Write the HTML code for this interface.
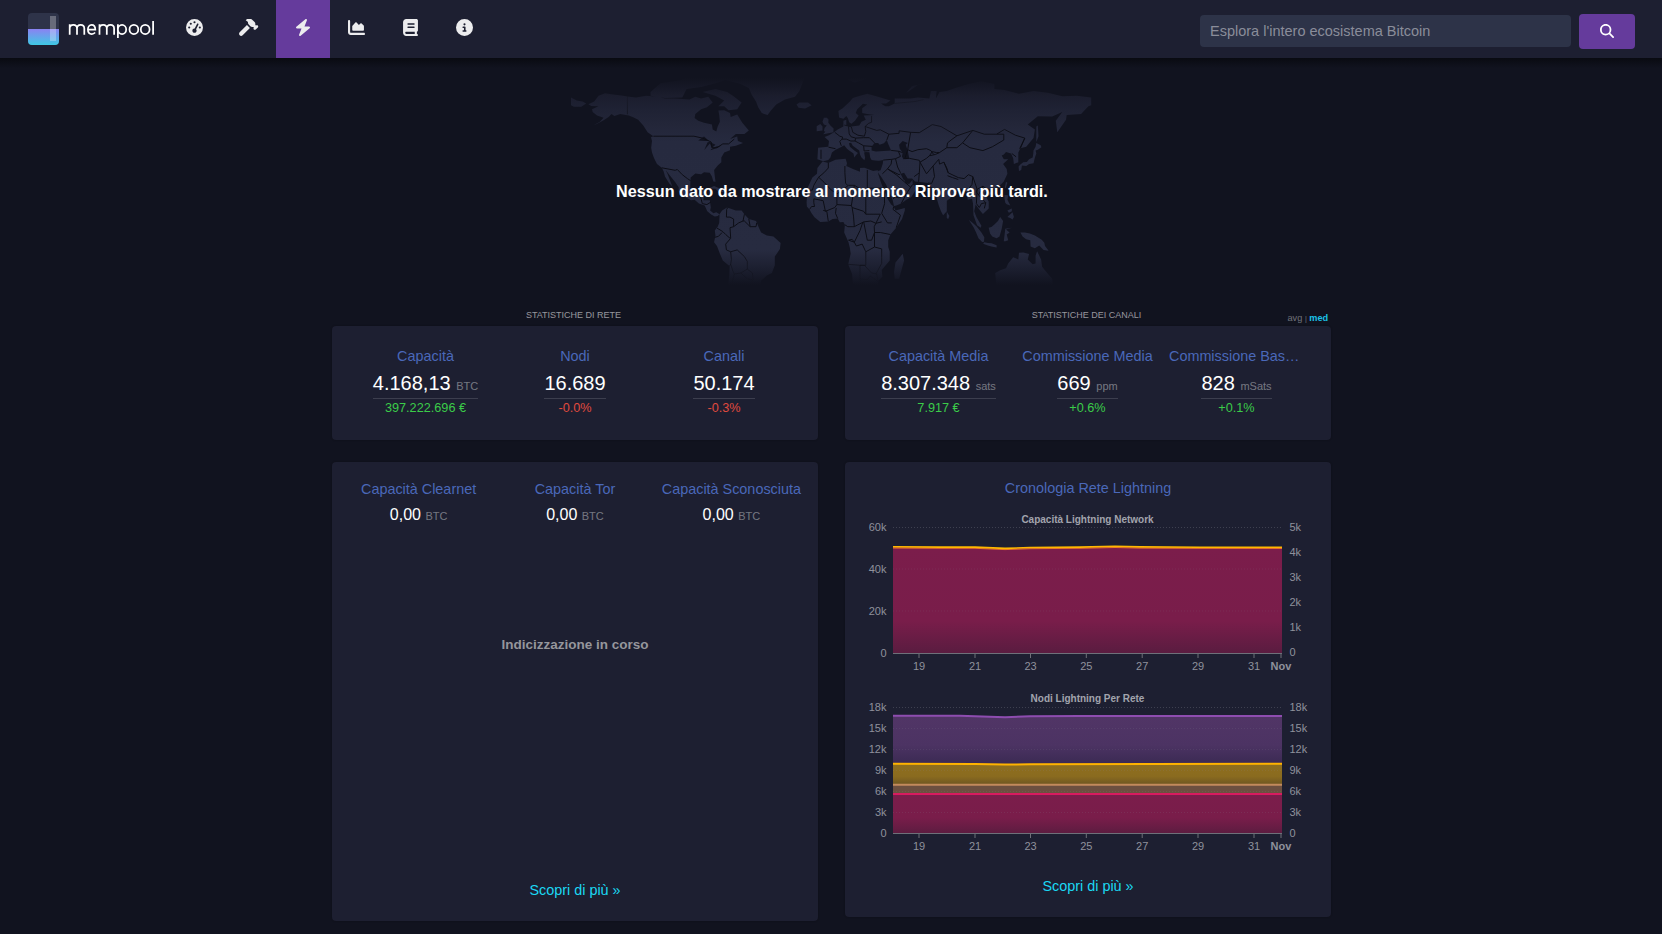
<!DOCTYPE html>
<html><head><meta charset="utf-8">
<style>
html,body{margin:0;padding:0;width:1662px;height:934px;overflow:hidden;background:#11131f;font-family:"Liberation Sans",sans-serif;color:#fff}
.abs{position:absolute}
.nav{position:absolute;left:0;top:0;width:1662px;height:58px;background:#1d1f31;z-index:2}
.navsh{position:absolute;left:0;top:58px;width:1662px;height:10px;background:linear-gradient(rgba(4,5,8,.6),rgba(4,5,8,0));z-index:2}
.logo{position:absolute;left:28px;top:13px;width:31px;height:32px;border-radius:4px;overflow:hidden;background:#2e3349}
.logo .bot{position:absolute;left:0;top:16px;width:31px;height:16px;background:linear-gradient(#8b82f2,#3ec9e4)}
.logo .bar{position:absolute;left:22px;top:3px;width:6px;height:25px;background:rgba(255,255,255,.28)}
.brand{position:absolute;left:68px;top:15.5px;font-size:21px;color:#fff;letter-spacing:0px}
.navi{position:absolute;top:0;width:54px;height:58px}
.navi svg{position:absolute;fill:#ececee}
.active{background:#653b9c}
.search{position:absolute;left:1200px;top:15px;width:371px;height:32px;background:#2d3348;border-radius:4px}
.search span{position:absolute;left:10px;top:8px;font-size:14.5px;color:#8a8d9a}
.sbtn{position:absolute;left:1579px;top:14px;width:56px;height:35px;background:#653b9c;border-radius:4px}
.main-title{position:absolute;font-size:9px;color:#ffffff91;text-transform:uppercase;text-align:center;width:486px;top:310px}
.card{position:absolute;background:#1d1f31;border-radius:4px;box-shadow:0 0 2px rgba(0,0,0,.3)}
.col{position:absolute;text-align:center;width:135px;padding:0 7px;line-height:normal}
.col3{position:absolute;text-align:center;width:156.4px;line-height:normal}
.val{display:inline-block;font-size:20px;color:#fff;border-bottom:1px solid #ffffff24;padding-bottom:3px}
.v3{font-size:16px;color:#fff}
.ct{font-size:14.4px;color:#4a68b9;white-space:nowrap;overflow:hidden;text-overflow:ellipsis}
.cv{font-size:20px;color:#fff}
.sym{font-size:11px;color:#ffffff66}
.green{color:#3bcc49}
.red{color:#e04a3e}
.sep{position:absolute;height:1px;background:#ffffff26}
.chg{font-size:12.7px}
.link{color:#1bd8f4;font-size:14.4px;text-align:center;position:absolute}
.ax{position:absolute;font-size:11px;color:#8c8c99}
</style></head><body>
<div class="nav">
  <div class="logo"><div class="bot"></div><div class="bar"></div></div>
  <svg class="abs" style="left:0;top:0" width="170" height="50" viewBox="0 0 170 50"><path d="M69.7,34.8 V24.2 M69.7,28.6 C69.7,26.2 71.3,24.9 73.4,24.9 C75.4,24.9 77.0,26.2 77.0,28.6 V34.8 M77.0,28.6 C77.0,26.2 78.6,24.9 80.7,24.9 C82.7,24.9 84.3,26.2 84.3,28.6 V34.8 M87.9,29.7 H95.3 C95.3,26.8 93.7,24.9 91.6,24.9 C89.4,24.9 87.9,26.9 87.9,29.45 C87.9,32.1 89.5,34 91.8,34 C93.2,34 94.3,33.4 95.1,32.5 M99.5,34.8 V24.2 M99.5,28.6 C99.5,26.2 101.1,24.9 103.2,24.9 C105.2,24.9 106.8,26.2 106.8,28.6 V34.8 M106.8,28.6 C106.8,26.2 108.4,24.9 110.5,24.9 C112.5,24.9 114.1,26.2 114.1,28.6 V34.8 M117.9,24.2 V38 M117.9,29.45 A4.15,4.55 0 1 1 126.2,29.45 A4.15,4.55 0 1 1 117.9,29.45 M129.5,29.45 A4.4,4.55 0 1 1 138.3,29.45 A4.4,4.55 0 1 1 129.5,29.45 M140.8,29.45 A4.4,4.55 0 1 1 149.6,29.45 A4.4,4.55 0 1 1 140.8,29.45 M153.1,20.9 V34.8" fill="none" stroke="#fff" stroke-width="1.75"/></svg>
  <div class="navi" style="left:168px"><svg viewBox="0 0 512 512" style="left:18px;top:19px;width:17px;height:17px"><path d="M0 256a256 256 0 1 1 512 0 256 256 0 1 1-512 0M288 96a32 32 0 1 0-64 0 32 32 0 1 0 64 0m-32 320c35.3 0 64-28.7 64-64 0-16.2-6-31.1-16-42.3l69.5-138.9c5.9-11.9 1.1-26.3-10.7-32.2s-26.3-1.1-32.2 10.7l-69.5 138.9c-1.700-.1-3.4-.2-5.1-.2-35.3 0-64 28.7-64 64s28.7 64 64 64m-80-272a32 32 0 1 0-64 0 32 32 0 1 0 64 0M96 288a32 32 0 1 0 0-64 32 32 0 1 0 0 64m352-32a32 32 0 1 0-64 0 32 32 0 1 0 64 0"/></svg></div>
  <div class="navi" style="left:222px"><svg viewBox="0 0 640 512" style="left:16px;top:19px;width:21px;height:17px"><path d="M246.9 18.3 271 3.8c21.6-13 46.3-19.8 71.5-19.8 36.8 0 72.2 14.6 98.2 40.7l63.9 63.9c15 15 23.4 35.4 23.4 56.6v30.9l19.7 19.7c15.6-15.600 40.9-15.6 56.6 0s15.6 40.9 0 56.6l-64 64c-15.6 15.6-40.9 15.6-56.6 0s-15.6-40.9 0-56.6L464 240h-30.9c-21.2 0-41.6-8.4-56.6-23.4l-49.1-49.1c-15-15-23.4-35.4-23.4-56.6V98.2c0-11.2-5.9-21.700-15.5-27.4l-41.6-25c-10.4-6.2-10.4-21.2 0-27.4zM50.7 402.7l222.1-222.1 90.5 90.5-222.1 222.1c-25 25-65.5 25-90.5 0s-25-65.5 0-90.5"/></svg></div>
  <div class="navi active" style="left:276px"><svg viewBox="0 0 448 512" style="left:20px;top:19px;width:14px;height:17px"><path d="M338.8-9.9c11.9 8.6 16.3 24.2 10.9 37.8L271.3 224H416c13.5 0 25.5 8.4 30.1 21.1s.7 26.9-9.6 35.5l-288 240c-11.3 9.4-27.4 9.9-39.3 1.3s-16.3-24.2-10.9-37.8L176.7 288H32c-13.5 0-25.5-8.4-30.1-21.1s-.7-26.9 9.6-35.5l288-240c11.3-9.4 27.4-9.9 39.3-1.3"/></svg></div>
  <div class="navi" style="left:330px"><svg viewBox="0 0 512 512" style="left:18px;top:19px;width:17px;height:17px"><path d="M32 32c17.7 0 32 14.3 32 32v336c0 8.8 7.2 16 16 16h400c17.7 0 32 14.3 32 32s-14.3 32-32 32H80c-44.2 0-80-35.8-80-80V64c0-17.7 14.3-32 32-32m208 64c6.7 0 13.1 2.8 17.7 7.8l71.1 77.5L375 135c9.4-9.4 24.6-9.4 33.9 0l64 64c4.5 4.5 7 10.600 7 17v112c0 13.3-10.7 24-24 24h-304c-13.3 0-24-10.7-24-24V216c0-6 2.3-11.8 6.3-16.2l88-96c4.5-5 11-7.8 17.7-7.8z"/></svg></div>
  <div class="navi" style="left:384px"><svg viewBox="0 0 448 512" style="left:19px;top:19px;width:15px;height:17px"><path d="M384 512H96c-53 0-96-43-96-96V96C0 43 43 0 96 0h304c26.5 0 48 21.5 48 48v288c0 20.9-13.4 38.7-32 45.3V448c17.700 0 32 14.3 32 32s-14.3 32-32 32zM96 384c-17.7 0-32 14.3-32 32s14.3 32 32 32h256v-64zm32-232c0 13.3 10.7 24 24 24h176c13.3 0 24-10.7 24-24s-10.7-24-24-24H152c-13.3 0-24 10.7-24 24m24 72c-13.3 0-24 10.7-24 24s10.7 24 24 24h176c13.3 0 24-10.7 24-24s-10.7-24-24-24z"/></svg></div>
  <div class="navi" style="left:438px"><svg viewBox="0 0 512 512" style="left:18px;top:19px;width:17px;height:17px"><path d="M256 512a256 256 0 1 0 0-512 256 256 0 1 0 0 512m-32-352a32 32 0 1 1 64 0 32 32 0 1 1-64 0m-8 64h48c13.3 0 24 10.7 24 24v88h8c13.3 0 24 10.7 24 24s-10.7 24-24 24h-80c-13.3 0-24-10.7-24-24s10.7-24 24-24h24v-64h-24c-13.3 0-24-10.7-24-24s10.7-24 24-24"/></svg></div>
  <div class="search"><span>Esplora l'intero ecosistema Bitcoin</span></div>
  <div class="sbtn"><svg viewBox="0 0 512 512" style="position:absolute;left:21px;top:10px;width:14px;height:14px;fill:#fff"><path d="M416 208c0 45.9-14.9 88.3-40 122.7l126.6 126.7c12.5 12.5 12.5 32.8 0 45.3s-32.8 12.5-45.3 0L330.7 376c-34.4 25.1-76.8 40-122.7 40C93.1 416 0 322.9 0 208S93.1 0 208 0s208 93.1 208 208M208 352a144 144 0 1 0 0-288 144 144 0 1 0 0 288"/></svg></div>
</div>

<!-- MAP -->
<div class="navsh"></div>
<svg class="abs" style="left:0;top:0" width="1662" height="320" viewBox="0 0 1662 320">
<defs><linearGradient id="lg" gradientUnits="userSpaceOnUse" x1="0" y1="72" x2="0" y2="292"><stop offset="0.027" stop-color="#11131f"/><stop offset="0.109" stop-color="#1b1d2d"/><stop offset="0.173" stop-color="#1f2234"/><stop offset="0.241" stop-color="#232639"/><stop offset="0.318" stop-color="#262a3f"/><stop offset="0.809" stop-color="#272b40"/><stop offset="0.891" stop-color="#1c1f30"/><stop offset="0.968" stop-color="#11131f"/></linearGradient><linearGradient id="bg2" gradientUnits="userSpaceOnUse" x1="0" y1="72" x2="0" y2="292"><stop offset="0.05" stop-color="#0c0d15" stop-opacity="0"/><stop offset="0.3" stop-color="#0c0d15" stop-opacity="1"/><stop offset="0.8" stop-color="#0c0d15" stop-opacity="1"/><stop offset="0.97" stop-color="#0c0d15" stop-opacity="0"/></linearGradient></defs>
<path fill="url(#lg)" d="M571.0 105.3 L573.9 106.7 L581.2 106.7 L586.2 103.4 L582.6 101.5 L576.8 100.5 L571.0 97.6Z M588.4 104.2 L594.2 101.5 L598.5 95.7 L605.0 93.2 L611.5 94.2 L621.6 95.5 L627.4 96.5 L636.1 97.6 L646.2 95.7 L657.8 96.7 L665.0 98.6 L675.1 98.6 L689.5 99.6 L695.3 96.7 L701.1 98.6 L708.3 96.7 L712.7 102.5 L706.9 107.3 L701.1 109.2 L695.3 114.0 L694.6 117.9 L698.2 120.8 L704.0 122.7 L711.9 124.6 L712.7 129.4 L716.3 131.4 L717.7 126.5 L719.9 121.7 L719.2 115.0 L718.4 110.5 L724.2 110.2 L730.0 113.1 L730.7 116.9 L737.2 114.6 L742.3 122.7 L748.8 130.4 L744.4 133.9 L735.8 133.9 L730.0 139.1 L737.2 136.6 L737.9 141.0 L743.0 142.9 L735.8 145.8 L730.0 146.8 L730.0 150.2 L724.2 152.6 L721.3 157.4 L721.3 162.2 L717.7 165.5 L714.1 169.9 L714.8 176.6 L715.5 181.8 L713.4 181.5 L711.9 176.6 L709.8 172.8 L704.0 172.2 L701.1 174.3 L695.3 173.6 L690.6 177.6 L690.3 184.4 L690.3 189.2 L693.2 194.4 L698.2 194.8 L700.4 190.1 L705.4 189.2 L704.0 195.9 L703.3 200.2 L709.8 200.2 L710.8 207.5 L710.1 210.4 L713.4 213.3 L716.3 212.3 L719.5 214.2 L717.7 216.1 L714.8 216.5 L711.2 214.6 L707.3 211.3 L704.7 205.5 L698.9 203.6 L694.6 199.8 L691.0 200.2 L685.2 196.9 L678.7 191.5 L678.7 187.2 L675.1 182.0 L669.3 174.7 L665.7 169.9 L667.9 174.7 L672.2 186.3 L669.3 183.4 L665.0 176.6 L663.5 170.9 L661.8 167.8 L657.0 164.1 L654.1 158.3 L652.0 152.6 L651.2 147.7 L652.0 141.0 L651.0 137.3 L653.4 136.2 L647.6 132.3 L643.3 125.6 L638.2 119.8 L633.2 117.3 L628.8 115.4 L620.2 114.0 L614.4 115.9 L611.5 114.0 L608.6 116.9 L602.8 120.8 L597.1 123.7 L593.4 125.6 L599.9 121.7 L603.6 117.7 L597.1 115.4 L592.7 112.1 L592.0 109.2 L598.5 106.3 L591.3 106.1Z M725.7 80.3 L737.2 74.5 L758.9 71.6 L780.6 69.7 L799.4 71.6 L805.1 76.4 L802.2 84.1 L799.4 90.9 L795.0 96.7 L784.9 99.6 L776.2 104.4 L770.5 111.1 L767.6 115.0 L761.8 113.1 L758.2 107.3 L756.0 101.5 L751.7 94.7 L748.8 88.0 L740.1 83.8Z M715.5 89.0 L727.1 91.9 L732.9 95.7 L741.6 102.5 L737.2 109.2 L728.6 110.2 L724.2 106.3 L718.4 106.3 L724.2 100.5 L715.5 95.7 L702.5 91.9Z M650.5 91.9 L660.6 83.2 L679.4 80.3 L693.9 75.5 L715.5 70.7 L737.2 71.6 L730.0 78.4 L715.5 83.2 L701.1 87.0 L686.6 89.0 L682.3 97.6 L665.0 98.0 L650.5 95.7Z M708.3 188.6 L714.1 185.9 L719.2 188.2 L723.9 191.7 L719.2 192.4 L715.5 188.8Z M723.5 195.0 L726.4 192.3 L732.2 194.8 L728.6 196.3Z M719.5 214.2 L722.1 210.4 L727.1 207.5 L730.0 208.4 L735.8 210.4 L741.6 210.4 L744.4 214.2 L748.8 219.0 L756.0 221.0 L758.9 227.7 L761.1 232.5 L766.8 235.4 L773.4 236.4 L780.6 243.1 L779.9 248.9 L774.8 256.6 L774.8 265.3 L771.9 273.0 L766.8 275.5 L761.1 280.7 L761.1 285.5 L756.0 292.3 L753.1 297.1 L748.1 298.0 L748.8 304.8 L741.6 305.8 L737.2 309.6 L738.7 312.5 L734.3 319.2 L735.8 323.1 L731.4 329.8 L732.2 332.7 L727.1 333.7 L722.8 328.9 L724.2 317.3 L724.9 307.7 L727.8 288.4 L729.3 274.9 L729.7 266.2 L722.8 260.5 L719.9 253.7 L717.0 246.0 L714.1 242.2 L715.5 235.4 L714.8 230.6 L717.7 226.7 L719.2 222.9 L719.5 217.1Z M806.6 202.3 L807.3 193.0 L806.6 190.1 L812.4 177.6 L817.0 173.8 L817.4 168.0 L822.5 161.6 L828.3 163.0 L835.5 159.7 L845.6 158.7 L847.0 163.2 L846.3 166.0 L853.5 169.3 L860.0 171.8 L860.0 168.0 L864.4 167.8 L873.1 171.1 L877.8 170.3 L878.1 173.8 L881.7 184.4 L884.6 191.1 L887.5 198.8 L891.1 204.6 L893.7 206.5 L895.5 210.4 L904.8 207.9 L904.8 210.4 L902.0 219.0 L896.2 227.7 L890.4 234.5 L888.2 240.2 L888.2 247.0 L889.7 251.8 L889.7 260.5 L881.7 270.1 L882.4 276.8 L878.5 280.7 L878.1 286.5 L874.5 291.3 L870.2 295.2 L863.7 296.1 L857.9 296.5 L856.9 290.3 L852.8 282.6 L852.1 274.0 L848.2 264.3 L850.7 253.7 L849.9 247.9 L848.5 242.2 L844.2 232.5 L844.9 224.8 L843.4 221.9 L839.8 222.3 L837.7 218.5 L832.6 219.0 L828.3 221.4 L820.3 222.1 L814.5 217.3 L811.6 213.3 L809.5 209.4 L806.9 206.5Z M894.7 278.8 L899.1 278.8 L904.1 260.5 L902.7 253.7 L900.5 256.6 L895.5 262.4 L894.0 272.0Z M817.4 159.3 L823.2 161.2 L828.3 159.9 L830.4 157.4 L831.9 152.6 L835.5 149.7 L839.8 147.7 L844.2 145.2 L847.0 148.7 L849.2 150.6 L853.5 153.5 L854.3 157.4 L855.7 155.4 L857.9 153.1 L854.3 150.6 L849.9 146.8 L848.9 143.3 L851.1 142.7 L852.8 145.8 L859.3 150.6 L860.0 154.5 L861.5 157.4 L864.4 160.3 L865.1 157.8 L864.1 152.6 L865.8 152.0 L869.4 152.2 L870.2 157.4 L871.6 159.9 L875.2 160.5 L878.8 160.8 L883.2 160.1 L882.9 163.2 L881.7 167.0 L880.6 170.3 L878.1 170.9 L878.1 172.8 L881.0 176.6 L886.1 184.4 L889.7 193.0 L892.6 199.8 L894.0 206.1 L896.2 205.5 L901.2 203.6 L906.3 199.8 L911.3 196.9 L915.0 191.1 L917.6 187.2 L912.8 184.4 L912.4 179.9 L909.2 184.0 L905.6 183.4 L904.8 180.5 L903.4 179.5 L900.5 173.8 L904.1 172.8 L907.7 178.6 L912.1 178.6 L915.0 181.5 L920.7 182.0 L928.0 183.0 L931.6 187.2 L935.9 190.1 L936.6 197.8 L938.8 205.5 L941.0 211.3 L943.1 215.2 L946.8 211.3 L946.8 200.7 L949.6 198.8 L956.1 192.1 L959.8 188.6 L964.1 189.2 L967.0 193.0 L967.7 199.8 L972.0 198.8 L973.0 203.6 L973.5 215.2 L977.1 225.2 L980.7 227.7 L981.4 225.8 L976.4 217.1 L974.2 211.3 L975.6 204.6 L980.0 210.4 L982.9 214.0 L988.7 208.4 L988.7 201.7 L984.3 193.0 L987.9 188.8 L991.5 189.2 L998.8 186.7 L1003.8 181.5 L1007.4 173.8 L1006.7 168.9 L1003.1 164.1 L1008.2 159.3 L1003.8 159.3 L1001.7 155.4 L1003.8 154.5 L1006.0 152.0 L1011.1 153.5 L1013.2 158.3 L1013.9 164.1 L1018.3 162.2 L1018.3 152.6 L1020.4 148.3 L1026.2 146.8 L1033.5 138.1 L1034.9 129.4 L1027.7 124.6 L1037.8 116.3 L1052.2 116.5 L1062.3 112.1 L1055.8 120.8 L1057.3 132.3 L1066.0 119.8 L1066.7 115.0 L1081.1 114.0 L1088.4 106.3 L1091.2 105.3 L1091.2 97.6 L1076.8 95.7 L1062.3 96.3 L1047.9 92.8 L1033.5 90.9 L1019.0 93.8 L1004.5 89.9 L994.4 89.0 L994.4 84.1 L981.4 81.3 L968.4 84.1 L955.4 88.0 L946.8 90.9 L939.5 91.9 L935.9 98.6 L936.6 90.9 L930.9 90.9 L929.4 98.6 L917.9 97.6 L910.6 98.6 L907.7 98.6 L894.7 98.6 L894.7 103.4 L888.9 106.3 L885.3 106.3 L881.0 103.4 L886.1 103.4 L890.4 100.5 L878.8 97.1 L874.5 95.7 L867.3 93.8 L860.0 95.7 L852.8 98.0 L849.9 101.5 L842.7 108.2 L838.4 111.1 L839.1 117.5 L843.4 118.8 L846.3 115.9 L847.8 117.9 L849.2 122.3 L851.4 123.7 L855.0 120.8 L858.6 115.4 L855.7 113.1 L857.2 109.2 L862.9 103.8 L867.3 104.4 L862.2 108.2 L862.2 113.1 L867.3 114.0 L874.5 115.0 L863.7 115.4 L865.8 119.8 L861.5 121.7 L859.3 125.6 L851.4 126.5 L846.3 125.6 L846.3 119.8 L843.4 120.8 L843.4 126.5 L837.7 129.4 L834.0 132.3 L829.0 135.2 L824.6 137.1 L829.0 141.0 L828.3 146.8 L818.1 147.7Z M823.2 134.2 L833.3 132.3 L833.6 128.5 L830.4 125.6 L828.3 122.7 L828.5 119.6 L826.8 117.7 L823.9 117.7 L822.5 121.7 L823.9 124.6 L826.8 125.6 L824.6 127.9 L823.9 131.0 L825.4 131.7Z M816.7 131.2 L822.5 130.4 L822.5 126.5 L820.3 124.0 L816.7 126.2Z M796.5 104.4 L799.4 102.5 L808.0 102.5 L811.6 105.3 L805.1 108.4 L798.6 107.7Z M1019.0 170.9 L1021.2 169.9 L1021.9 165.5 L1026.2 166.0 L1029.1 164.1 L1033.5 163.2 L1034.9 157.4 L1036.3 153.5 L1035.6 150.6 L1037.8 149.7 L1041.4 147.2 L1040.7 145.2 L1036.3 142.9 L1035.6 146.8 L1033.5 150.6 L1033.3 153.5 L1032.7 157.4 L1029.1 159.3 L1026.9 162.0 L1023.3 162.2 L1020.4 164.5 L1018.6 166.6Z M1036.3 142.0 L1038.5 136.2 L1037.8 125.6 L1036.3 126.5Z M946.8 211.7 L949.4 216.1 L948.2 219.0 L946.8 218.1Z M1004.8 187.2 L1006.0 181.8 L1007.4 182.8 L1005.6 188.4Z M988.2 193.6 L990.1 191.9 L991.5 193.0 L989.4 195.5Z M1004.5 195.0 L1008.2 195.3 L1007.4 199.8 L1010.3 205.5 L1006.7 204.2 L1005.3 202.7 L1004.5 198.8Z M1007.4 217.1 L1012.5 212.3 L1013.9 217.1 L1012.5 219.4 L1010.3 218.1Z M1007.4 210.4 L1011.8 208.4 L1011.8 211.3 L1008.9 212.7Z M988.7 227.7 L990.1 233.5 L992.3 236.4 L996.6 238.3 L999.5 236.4 L1001.7 228.7 L1003.1 221.0 L1000.2 217.1 L998.0 221.0 L994.4 224.4 L991.5 227.1Z M968.9 220.0 L972.8 222.9 L976.4 226.2 L981.4 232.5 L984.3 237.3 L984.0 241.8 L982.2 242.0 L978.5 238.3 L976.1 232.5 L973.6 227.3Z M983.2 243.7 L984.3 242.2 L987.9 243.1 L991.5 243.3 L996.6 245.2 L996.6 247.4 L991.5 246.6 L987.9 245.6Z M1003.8 241.2 L1005.3 228.7 L1011.8 227.7 L1006.0 229.6 L1009.6 232.5 L1006.7 234.5 L1008.2 240.2 L1005.3 241.2Z M1020.4 232.5 L1024.8 232.5 L1029.8 233.5 L1034.9 235.6 L1041.7 239.8 L1044.3 242.7 L1045.0 246.0 L1048.6 250.8 L1043.6 249.9 L1039.2 245.6 L1034.9 248.3 L1030.6 246.6 L1030.3 240.2 L1026.2 239.3 L1022.6 236.4Z M995.2 273.0 L995.9 280.7 L997.3 296.1 L1001.7 298.0 L1008.9 296.1 L1017.6 291.5 L1024.8 293.2 L1029.8 298.0 L1033.5 303.4 L1039.2 304.4 L1044.3 303.8 L1047.9 302.9 L1053.0 285.5 L1052.2 278.8 L1047.2 273.0 L1042.1 266.8 L1041.1 259.5 L1037.1 251.2 L1035.6 255.7 L1035.6 263.4 L1032.7 264.3 L1027.7 259.5 L1029.1 254.1 L1023.3 252.4 L1019.0 252.8 L1018.3 259.5 L1013.2 257.2 L1008.2 263.4 L1006.0 268.2 L1000.2 270.3Z M1040.7 309.2 L1045.4 309.6 L1043.6 314.4 L1041.4 312.5Z M1081.1 297.1 L1089.1 303.2 L1085.5 310.6 L1083.3 306.7Z M1080.7 308.6 L1083.0 311.0 L1078.2 316.4 L1073.9 320.4 L1071.7 318.3Z M906.3 92.8 L912.1 86.1 L929.4 82.6 L917.9 85.1 L910.6 89.9Z M847.0 79.3 L855.7 76.4 L870.2 76.4 L862.9 80.3 L854.3 82.6Z"/>
<path fill="#11131f" d="M899.1 144.8 L902.7 141.0 L907.7 142.9 L905.6 144.8 L907.7 150.6 L909.2 158.3 L903.4 159.3 L902.0 156.4 L902.7 152.6 L899.8 148.7Z M871.6 150.6 L871.6 146.8 L874.5 142.9 L878.1 142.9 L879.6 144.8 L883.9 143.3 L886.8 140.0 L888.2 143.9 L891.1 150.4 L883.2 151.0 L875.9 151.4Z M698.2 140.6 L704.0 136.6 L709.0 141.0 L705.4 141.0Z M704.3 150.1 L707.6 142.3 L709.8 142.0 L715.5 144.8 L711.9 147.7 L709.8 143.5 L706.2 147.7Z M710.5 150.2 L717.0 148.1 L721.3 145.4 L716.3 146.6 L711.2 149.1Z"/>
<path fill="none" stroke="url(#bg2)" stroke-width="1" stroke-linejoin="round" d="M627.4 114.4 L627.4 96.5 M653.4 136.2 L693.9 136.2 L702.5 138.1 L711.2 142.0 L711.9 147.7 L717.0 147.7 L722.8 143.9 L728.6 143.9 L734.3 139.1 M661.8 167.8 L675.1 170.3 L677.3 169.5 L682.3 174.7 L687.4 178.6 L690.6 180.7 M698.2 195.9 L700.4 196.3 L702.3 203.6 L706.9 204.6 L710.8 202.1 M818.6 177.2 L824.2 182.4 L831.1 189.9 L836.9 194.0 L848.5 185.3 L854.3 185.3 L865.8 192.1 L867.3 188.2 L876.7 188.2 L884.3 188.2 M844.9 172.8 L845.6 183.4 L847.8 185.3 M867.3 169.9 L867.3 192.1 M813.8 198.8 L823.2 200.7 L825.4 211.3 L834.8 207.5 L836.9 204.6 L851.4 205.5 L852.1 207.5 L863.7 211.3 L865.8 214.2 L880.3 214.2 M852.1 207.5 L853.5 216.1 L854.3 226.7 L857.9 224.8 L863.7 221.9 L870.9 221.0 L875.9 223.3 L881.7 221.9 M844.9 224.8 L847.8 226.7 L852.1 226.7 L854.3 226.7 M848.5 240.2 L854.3 242.2 L856.4 246.0 L862.2 244.1 L865.8 251.8 L874.5 247.0 L881.7 248.9 M848.2 264.3 L860.0 265.3 L864.4 265.3 L871.6 273.0 L876.7 274.0 L878.1 281.7 M860.0 265.3 L860.0 278.8 L860.0 285.5 L856.4 285.5 M871.6 240.2 L874.5 232.5 L874.2 226.7 L875.9 223.3 M880.3 232.5 L890.4 234.5 M893.7 206.5 L893.0 209.4 L900.5 215.2 L896.2 227.7 M884.3 188.2 L884.6 203.6 L881.7 213.3 L887.5 222.9 L891.8 222.9 M854.3 242.2 L860.0 230.6 L862.9 221.9 M828.3 221.4 L826.8 211.3 L823.2 210.4 M837.7 218.5 L835.5 213.3 L836.2 207.9 M828.5 147.2 L835.5 148.7 M821.0 158.9 L821.0 149.7 M839.8 136.2 L842.7 137.1 L842.0 139.1 L839.8 141.4 L841.3 145.8 M839.8 136.2 L834.8 132.3 M844.2 125.0 L851.4 126.9 L852.8 132.3 L857.9 135.2 L864.4 136.2 L865.8 131.4 L865.1 126.5 L868.7 123.3 L871.6 122.3 L871.6 115.9 M848.5 126.5 L849.2 133.9 L851.1 136.8 L855.7 138.1 L863.7 137.7 L869.4 137.7 L874.5 142.9 M855.7 138.1 L855.0 141.0 L850.8 141.0 L846.3 139.1 L842.0 139.1 M855.0 141.0 L858.6 142.9 L863.7 145.8 L872.3 146.4 M863.7 145.8 L864.1 151.0 L869.4 150.6 M865.1 126.5 L876.7 130.4 L880.3 129.8 L888.9 134.2 L886.8 140.0 M888.9 134.2 L899.1 133.3 L899.1 130.8 L910.6 132.3 L919.3 132.7 L932.3 124.6 L941.0 126.5 L956.9 135.8 L972.8 130.4 L984.3 134.2 L996.6 134.2 L1004.5 129.4 L1015.4 135.2 L1024.8 138.1 L1020.4 148.3 M956.9 135.8 L951.1 140.0 L947.5 142.9 L946.8 147.7 L939.5 152.6 L935.2 154.5 L929.4 155.8 L926.5 158.3 L920.0 162.2 L919.3 172.8 L914.2 176.6 M910.6 132.3 L907.7 149.7 L912.1 151.6 L917.9 149.7 L926.5 148.7 L930.9 150.6 L933.7 154.5 M972.8 130.4 L962.6 142.9 L969.9 147.7 L982.9 150.6 L992.3 146.8 L1003.8 140.0 L1003.8 134.2 L996.6 134.2 M920.0 162.2 L926.5 173.8 L933.0 166.0 L938.8 159.3 L939.5 164.1 L943.9 162.2 L946.8 168.0 L948.2 172.8 L958.3 177.6 L964.1 178.6 L968.4 174.7 L972.8 176.6 L972.0 184.4 L967.7 190.1 M933.0 166.0 L934.5 176.6 L931.6 183.4 L928.0 183.0 M947.5 175.7 L952.5 177.6 L958.3 179.5 M972.8 176.6 L977.1 189.2 L982.9 186.3 L987.2 189.2 M977.1 189.2 L976.4 203.6 L979.3 207.5 M982.9 186.3 L978.5 195.0 L985.8 202.7 L984.3 208.4 M883.2 160.1 L891.8 159.3 L895.5 158.7 L900.5 156.4 L898.3 151.2 L891.1 150.4 M891.8 159.3 L891.1 164.1 L887.5 168.9 L882.4 173.8 M895.5 158.7 L897.6 167.0 L900.5 172.8 M887.5 168.9 L899.1 174.7 L900.5 173.8 M887.5 168.9 L896.2 174.7 L910.6 187.2 L906.3 194.0 L901.2 203.6 M912.8 184.4 L910.6 187.2 M893.0 198.8 L895.5 196.9 L899.1 197.8 L906.3 194.0 M919.3 172.8 L918.6 181.8 M1011.8 153.5 L1016.1 156.8 M894.7 103.4 L915.0 101.5 L923.6 99.6 M727.8 207.5 L726.7 209.4 L726.4 217.1 L730.0 217.1 L733.6 219.0 L733.6 226.7 L730.0 227.7 L730.7 238.3 L725.7 244.1 L726.4 249.9 L730.7 251.8 L737.2 249.9 L744.4 256.6 L747.3 261.4 L747.3 269.1 L752.4 273.0 L753.1 279.7 L748.1 288.4 L753.8 295.2 M744.4 214.2 L743.0 221.0 L738.7 222.9 L733.6 226.7 M743.0 221.0 L744.4 221.0 L750.2 226.7 L756.0 226.7 L756.7 222.9 M748.8 219.0 L750.2 226.7 M717.0 228.1 L722.8 231.6 L725.7 234.5 L730.0 238.3 M714.8 237.3 L718.4 236.4 L722.1 232.5 M730.7 251.8 L731.4 259.5 L730.7 264.3 L729.4 266.1 M730.7 264.3 L732.9 271.1 L734.3 274.0 L740.8 273.0 L747.3 269.1 M734.3 274.0 L732.2 282.6 L730.0 294.2 L728.6 307.7 L727.1 319.2 L725.7 326.9 L731.4 330.8 M740.8 273.0 L747.3 278.8 L752.4 279.7 M748.1 288.4 L746.6 296.1 M806.6 190.1 L812.4 190.1 L813.8 185.3 L818.6 177.2 M813.8 198.8 L813.8 202.7 L814.5 206.5 L811.6 206.5 L809.5 209.4 M836.9 204.6 L836.9 194.0 M854.3 185.3 L853.5 192.1 L851.4 205.5 M865.8 192.1 L865.8 214.2 M875.9 223.3 L880.3 214.2 M863.7 221.9 L867.3 240.2 L871.6 240.2 M848.5 240.2 L852.1 239.3 L854.3 242.2 M865.8 251.8 L865.8 265.3 L860.0 265.3 M881.7 248.9 L881.7 257.6 L881.7 263.4 L875.9 274.0 M874.5 247.0 L874.5 232.5 L880.3 232.5 M878.1 281.7 L870.2 275.9 L867.3 279.7 L860.0 278.8 M844.9 166.0 L844.9 172.8 M818.6 177.2 L823.9 172.8 L828.3 168.0 L828.3 163.0 M907.7 149.7 L904.8 158.7 L909.2 158.3 L919.3 160.3 L920.0 162.2 M898.3 151.2 L902.7 152.6 M929.4 155.8 L932.3 151.6 L936.6 152.6 L939.5 152.6 M946.8 147.7 L956.9 147.7 L962.6 142.9 M943.9 162.2 L948.2 172.8 M979.3 207.5 L981.4 203.6 L985.8 202.7 M978.5 195.0 L976.4 192.1 L977.1 189.2 M1019.7 148.7 L1024.8 138.1"/>
</svg>
<div class="abs" style="left:1px;width:1662px;top:181px;text-align:center;font-size:16.2px;line-height:20px;font-weight:bold;color:#fff">Nessun dato da mostrare al momento. Riprova più tardi.</div>

<!-- STAT CARDS -->
<div class="main-title" style="left:330.5px">Statistiche di rete</div>
<div class="main-title" style="left:843.5px">Statistiche dei canali</div>
<div class="abs" style="left:1287.5px;top:312.5px;font-size:9.2px;color:#ffffff66">avg <span style="font-size:7px">|</span> <b style="color:#1bc0e6">med</b></div>

<div class="card" style="left:332px;top:326px;width:486px;height:114px"></div>
<div class="card" style="left:845px;top:326px;width:486px;height:114px"></div>
<div class="card" style="left:332px;top:462px;width:486px;height:459px"></div>
<div class="card" style="left:845px;top:462px;width:486px;height:455px"></div>

<!-- card1 -->
<div class="col" style="left:351px;top:348px"><div class="ct">Capacità</div></div>
<div class="col" style="left:500.5px;top:348px"><div class="ct">Nodi</div></div>
<div class="col" style="left:649.5px;top:348px"><div class="ct">Canali</div></div>
<div class="col" style="left:351px;top:372px"><span class="val">4.168,13 <span class="sym">BTC</span></span></div>
<div class="col" style="left:500.5px;top:372px"><span class="val">16.689</span></div>
<div class="col" style="left:649.5px;top:372px"><span class="val">50.174</span></div>
<div class="col chg green" style="left:351px;top:401px">397.222.696 €</div>
<div class="col chg red" style="left:500.5px;top:401px">-0.0%</div>
<div class="col chg red" style="left:649.5px;top:401px">-0.3%</div>

<!-- card2 -->
<div class="col" style="left:864px;top:348px"><div class="ct">Capacità Media</div></div>
<div class="col" style="left:1013px;top:348px"><div class="ct">Commissione Media</div></div>
<div class="col" style="left:1162px;top:348px"><div class="ct">Commissione Base Media</div></div>
<div class="col" style="left:864px;top:372px"><span class="val">8.307.348 <span class="sym">sats</span></span></div>
<div class="col" style="left:1013px;top:372px"><span class="val">669 <span class="sym">ppm</span></span></div>
<div class="col" style="left:1162px;top:372px"><span class="val">828 <span class="sym">mSats</span></span></div>
<div class="col chg green" style="left:864px;top:401px">7.917 €</div>
<div class="col chg green" style="left:1013px;top:401px">+0.6%</div>
<div class="col chg green" style="left:1162px;top:401px">+0.1%</div>

<!-- card3 -->
<div class="col3" style="left:340.4px;top:481px"><div class="ct">Capacità Clearnet</div></div>
<div class="col3" style="left:496.8px;top:481px"><div class="ct">Capacità Tor</div></div>
<div class="col3" style="left:653.2px;top:481px"><div class="ct">Capacità Sconosciuta</div></div>
<div class="col3 v3" style="left:340.4px;top:505.5px">0,00 <span class="sym">BTC</span></div>
<div class="col3 v3" style="left:496.8px;top:505.5px">0,00 <span class="sym">BTC</span></div>
<div class="col3 v3" style="left:653.2px;top:505.5px">0,00 <span class="sym">BTC</span></div>
<div class="abs" style="left:332px;width:486px;top:637px;text-align:center;font-size:13.5px;font-weight:bold;color:#95969c">Indicizzazione in corso</div>
<div class="link" style="left:332px;width:486px;top:882px">Scopri di più »</div>

<!-- card4 -->
<div class="abs ct" style="left:845px;width:486px;top:480px;text-align:center">Cronologia Rete Lightning</div>
<div class="link" style="left:845px;width:486px;top:878px">Scopri di più »</div>
<svg class="abs" style="left:0;top:0" width="1662" height="934" viewBox="0 0 1662 934">
<defs>
<linearGradient id="gp" x1="0" y1="0" x2="0" y2="1"><stop offset="0" stop-color="#7b1d4b"/><stop offset="0.7" stop-color="#791d4a"/><stop offset="1" stop-color="#5a1c40"/></linearGradient>
<linearGradient id="gp2" x1="0" y1="0" x2="0" y2="1"><stop offset="0" stop-color="#7b1d4b"/><stop offset="0.6" stop-color="#791d4a"/><stop offset="1" stop-color="#5c1c40"/></linearGradient>
<linearGradient id="gv" x1="0" y1="0" x2="0" y2="1"><stop offset="0" stop-color="#513566"/><stop offset="0.6" stop-color="#4c3363"/><stop offset="1" stop-color="#3a2a52"/></linearGradient>
<linearGradient id="gy" x1="0" y1="0" x2="0" y2="1"><stop offset="0" stop-color="#8e6e1e"/><stop offset="0.6" stop-color="#8a6b1f"/><stop offset="1" stop-color="#6e5522"/></linearGradient>
</defs>
<polygon fill="url(#gp)" points="893,546.8 940,547.1 975,547.1 1005,548.4 1030,547.5 1080,547.1 1115,546.3 1140,546.9 1200,547.2 1282,547.3 1282,653 893,653"/>
<line x1="893" y1="527.5" x2="1282" y2="527.5" stroke="#8b8d99" stroke-opacity="0.3" stroke-width="1" stroke-dasharray="1 2"/>
<line x1="893" y1="569" x2="1282" y2="569" stroke="#8b8d99" stroke-opacity="0.13" stroke-width="1" stroke-dasharray="1 2"/>
<line x1="893" y1="611" x2="1282" y2="611" stroke="#8b8d99" stroke-opacity="0.13" stroke-width="1" stroke-dasharray="1 2"/>
<polyline fill="none" stroke="#e8702a" stroke-width="1" points="893,548 940,548.3 975,548.3 1005,549.6 1030,548.7 1080,548.3 1115,547.5 1140,548.1 1200,548.4 1282,548.5"/>
<polyline fill="none" stroke="#ffb800" stroke-width="1.6" points="893,546.8 940,547.1 975,547.1 1005,548.4 1030,547.5 1080,547.1 1115,546.3 1140,546.9 1200,547.2 1282,547.3"/>
<line x1="893" y1="653.5" x2="1282" y2="653.5" stroke="#6e7079" stroke-width="1"/>
<line x1="919" y1="653.5" x2="919" y2="658" stroke="#6e7079" stroke-width="1"/>
<line x1="975" y1="653.5" x2="975" y2="658" stroke="#6e7079" stroke-width="1"/>
<line x1="1030.5" y1="653.5" x2="1030.5" y2="658" stroke="#6e7079" stroke-width="1"/>
<line x1="1086.3" y1="653.5" x2="1086.3" y2="658" stroke="#6e7079" stroke-width="1"/>
<line x1="1142.2" y1="653.5" x2="1142.2" y2="658" stroke="#6e7079" stroke-width="1"/>
<line x1="1198" y1="653.5" x2="1198" y2="658" stroke="#6e7079" stroke-width="1"/>
<line x1="1254" y1="653.5" x2="1254" y2="658" stroke="#6e7079" stroke-width="1"/>
<line x1="1281" y1="653.5" x2="1281" y2="658" stroke="#6e7079" stroke-width="1"/>
<polygon fill="url(#gp2)" points="893,794 1282,794 1282,833.5 893,833.5"/>
<polygon fill="#6c4f40" points="893,784.8 1282,784.8 1282,794 893,794"/>
<polygon fill="url(#gy)" points="893,763.8 975,764 1005,764.6 1030,764.2 1282,763.8 1282,784.8 893,784.8"/>
<polygon fill="url(#gv)" points="893,715.8 960,715.8 975,716.2 1005,717.3 1030,716.2 1080,715.9 1282,716 1282,763.8 1030,764.2 1005,764.6 975,764 893,763.8"/>
<line x1="893" y1="707.5" x2="1282" y2="707.5" stroke="#8b8d99" stroke-opacity="0.3" stroke-width="1" stroke-dasharray="1 2"/>
<line x1="893" y1="728.5" x2="1282" y2="728.5" stroke="#8b8d99" stroke-opacity="0.15" stroke-width="1" stroke-dasharray="1 2"/>
<line x1="893" y1="749.5" x2="1282" y2="749.5" stroke="#8b8d99" stroke-opacity="0.15" stroke-width="1" stroke-dasharray="1 2"/>
<line x1="893" y1="770.5" x2="1282" y2="770.5" stroke="#8b8d99" stroke-opacity="0.15" stroke-width="1" stroke-dasharray="1 2"/>
<line x1="893" y1="791.5" x2="1282" y2="791.5" stroke="#8b8d99" stroke-opacity="0.15" stroke-width="1" stroke-dasharray="1 2"/>
<line x1="893" y1="812.5" x2="1282" y2="812.5" stroke="#8b8d99" stroke-opacity="0.15" stroke-width="1" stroke-dasharray="1 2"/>
<polyline fill="none" stroke="#8e4db0" stroke-width="2" points="893,715.8 960,715.8 975,716.2 1005,717.3 1030,716.2 1080,715.9 1282,716"/>
<polyline fill="none" stroke="#ffb300" stroke-width="2" points="893,763.8 975,764 1005,764.6 1030,764.2 1282,763.8"/>
<polyline fill="none" stroke="#c38a5c" stroke-width="2" points="893,784.8 1282,784.8"/>
<polyline fill="none" stroke="#d81b60" stroke-width="2" points="893,794 1282,794"/>
<line x1="893" y1="833.5" x2="1282" y2="833.5" stroke="#6e7079" stroke-width="1"/>
<line x1="919" y1="833.5" x2="919" y2="838" stroke="#6e7079" stroke-width="1"/>
<line x1="975" y1="833.5" x2="975" y2="838" stroke="#6e7079" stroke-width="1"/>
<line x1="1030.5" y1="833.5" x2="1030.5" y2="838" stroke="#6e7079" stroke-width="1"/>
<line x1="1086.3" y1="833.5" x2="1086.3" y2="838" stroke="#6e7079" stroke-width="1"/>
<line x1="1142.2" y1="833.5" x2="1142.2" y2="838" stroke="#6e7079" stroke-width="1"/>
<line x1="1198" y1="833.5" x2="1198" y2="838" stroke="#6e7079" stroke-width="1"/>
<line x1="1254" y1="833.5" x2="1254" y2="838" stroke="#6e7079" stroke-width="1"/>
<line x1="1281" y1="833.5" x2="1281" y2="838" stroke="#6e7079" stroke-width="1"/>
<g font-family="Liberation Sans, sans-serif">
<text x="886.5" y="530.5" text-anchor="end" font-size="11" fill="#8f919c">60k</text>
<text x="886.5" y="572.5" text-anchor="end" font-size="11" fill="#8f919c">40k</text>
<text x="886.5" y="614.5" text-anchor="end" font-size="11" fill="#8f919c">20k</text>
<text x="886.5" y="656.5" text-anchor="end" font-size="11" fill="#8f919c">0</text>
<text x="1289.5" y="530.5" text-anchor="start" font-size="11" fill="#8f919c">5k</text>
<text x="1289.5" y="555.6" text-anchor="start" font-size="11" fill="#8f919c">4k</text>
<text x="1289.5" y="580.7" text-anchor="start" font-size="11" fill="#8f919c">3k</text>
<text x="1289.5" y="605.9" text-anchor="start" font-size="11" fill="#8f919c">2k</text>
<text x="1289.5" y="631" text-anchor="start" font-size="11" fill="#8f919c">1k</text>
<text x="1289.5" y="656.2" text-anchor="start" font-size="11" fill="#8f919c">0</text>
<text x="886.5" y="710.5" text-anchor="end" font-size="11" fill="#8f919c">18k</text>
<text x="1289.5" y="710.5" text-anchor="start" font-size="11" fill="#8f919c">18k</text>
<text x="886.5" y="731.5" text-anchor="end" font-size="11" fill="#8f919c">15k</text>
<text x="1289.5" y="731.5" text-anchor="start" font-size="11" fill="#8f919c">15k</text>
<text x="886.5" y="752.5" text-anchor="end" font-size="11" fill="#8f919c">12k</text>
<text x="1289.5" y="752.5" text-anchor="start" font-size="11" fill="#8f919c">12k</text>
<text x="886.5" y="773.5" text-anchor="end" font-size="11" fill="#8f919c">9k</text>
<text x="1289.5" y="773.5" text-anchor="start" font-size="11" fill="#8f919c">9k</text>
<text x="886.5" y="794.5" text-anchor="end" font-size="11" fill="#8f919c">6k</text>
<text x="1289.5" y="794.5" text-anchor="start" font-size="11" fill="#8f919c">6k</text>
<text x="886.5" y="815.5" text-anchor="end" font-size="11" fill="#8f919c">3k</text>
<text x="1289.5" y="815.5" text-anchor="start" font-size="11" fill="#8f919c">3k</text>
<text x="886.5" y="836.5" text-anchor="end" font-size="11" fill="#8f919c">0</text>
<text x="1289.5" y="836.5" text-anchor="start" font-size="11" fill="#8f919c">0</text>
<text x="919" y="670" text-anchor="middle" font-size="11" fill="#8f919c">19</text>
<text x="975" y="670" text-anchor="middle" font-size="11" fill="#8f919c">21</text>
<text x="1030.5" y="670" text-anchor="middle" font-size="11" fill="#8f919c">23</text>
<text x="1086.3" y="670" text-anchor="middle" font-size="11" fill="#8f919c">25</text>
<text x="1142.2" y="670" text-anchor="middle" font-size="11" fill="#8f919c">27</text>
<text x="1198" y="670" text-anchor="middle" font-size="11" fill="#8f919c">29</text>
<text x="1254" y="670" text-anchor="middle" font-size="11" fill="#8f919c">31</text>
<text x="1281" y="670" text-anchor="middle" font-size="11" font-weight="bold" fill="#8f919c">Nov</text>
<text x="919" y="850" text-anchor="middle" font-size="11" fill="#8f919c">19</text>
<text x="975" y="850" text-anchor="middle" font-size="11" fill="#8f919c">21</text>
<text x="1030.5" y="850" text-anchor="middle" font-size="11" fill="#8f919c">23</text>
<text x="1086.3" y="850" text-anchor="middle" font-size="11" fill="#8f919c">25</text>
<text x="1142.2" y="850" text-anchor="middle" font-size="11" fill="#8f919c">27</text>
<text x="1198" y="850" text-anchor="middle" font-size="11" fill="#8f919c">29</text>
<text x="1254" y="850" text-anchor="middle" font-size="11" fill="#8f919c">31</text>
<text x="1281" y="850" text-anchor="middle" font-size="11" font-weight="bold" fill="#8f919c">Nov</text>
<text x="1087.5" y="522.5" text-anchor="middle" font-size="10" font-weight="bold" fill="#a2a4ad">Capacità Lightning Network</text>
<text x="1087.5" y="702.3" text-anchor="middle" font-size="10" font-weight="bold" fill="#a2a4ad">Nodi Lightning Per Rete</text>
</g>
</svg>
</body></html>
